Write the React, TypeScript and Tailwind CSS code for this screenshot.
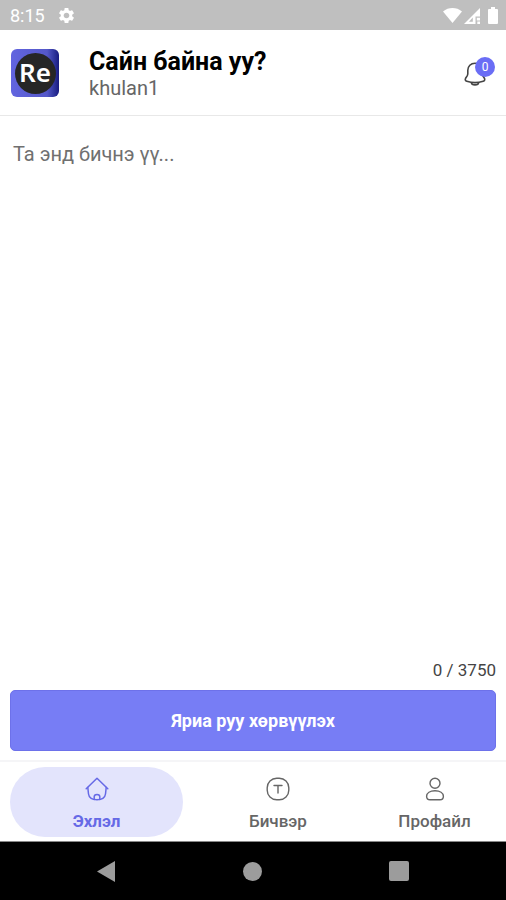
import { useState } from "react";
import { MdSettings } from "react-icons/md";

const MAX_CHARS = 3750;

function StatusBar() {
  return (
    <div className="flex h-[30px] items-center justify-between bg-[#bfbfbf] pt-px pr-2 pl-[10px] text-white">
      <div className="flex items-center gap-3">
        <span className="text-[18px] leading-6">8:15</span>
        <MdSettings className="size-[19px]" aria-hidden="true" />
      </div>
      <div className="flex items-center gap-[2px]" aria-hidden="true">
        <svg className="h-[15px] w-[19px]" viewBox="0 0 19 15" fill="currentColor">
          <path d="M9.500 15 0 3.400C5.500-1.100 13.500-1.100 19 3.400Z" />
        </svg>
        <svg className="h-[16px] w-[16px]" viewBox="0 0 16 16" fill="currentColor">
          <path d="M0 16 16 0v8.500h-4.500V16ZM8.800 9.500 5 13.800h3.800Z" fillRule="evenodd" />
          <path d="M12.800 9.800h3.200v2.600h-3.200zM13.300 13.600H16V16h-2.700z" />
        </svg>
        <svg className="ml-[6px] h-[17px] w-[10px]" viewBox="0 0 10 17" fill="currentColor">
          <path d="M3 0h4v2h2a1 1 0 0 1 1 1v13a1 1 0 0 1-1 1H1a1 1 0 0 1-1-1V3a1 1 0 0 1 1-1h2Z" />
        </svg>
      </div>
    </div>
  );
}

function Logo() {
  return (
    <div className="flex size-12 items-center justify-center rounded-[6px] bg-linear-to-r from-[#6265e0] via-[#5558c8] via-75% to-[#191b80]">
      <div className="flex size-[41px] items-center justify-center rounded-full bg-[#262626] pb-[2px] font-['Noto_Sans',sans-serif] text-[26px] leading-none font-semibold text-white">
        Re
      </div>
    </div>
  );
}

function Header() {
  return (
    <header className="flex h-[86px] items-center border-b border-[#e8e8e8] px-[11px] pt-px">
      <Logo />
      <div className="ml-[30px] flex-1 pt-px">
        <h1 className="text-[25px] leading-7 font-bold text-black">Сайн байна уу?</h1>
        <p className="text-[20px] leading-6 text-[#666]">khulan1</p>
      </div>
      <button type="button" aria-label="Notifications" className="relative flex h-8 w-8 items-center">
        <svg className="size-[26px] text-[#444]" viewBox="0 0 26 26" fill="none" stroke="currentColor" strokeWidth="1.600" strokeLinejoin="round">
          <path d="M12 3.200c-4.200 0-7.200 3-7.200 7v3.500c0 .8-.4 1.700-.8 2.400l-1.400 2.200c-.8 1.400-.2 2.600 1.200 3 5.300 1.700 11.100 1.700 16.400 0 1.400-.4 2-1.800 1.200-3L20 16.100c-.4-.7-.8-1.600-.8-2.400v-3.500c0-4-3.200-7-7.200-7Z" />
          <path d="M8.300 22.300c.4 3.400 7 3.400 7.400 0" />
        </svg>
        <span className="absolute top-0 right-0 flex size-5 items-center justify-center rounded-full bg-[#6a6df5] text-[12px] leading-none text-white">
          0
        </span>
      </button>
    </header>
  );
}

function HomeIcon() {
  return (
    <svg className="size-6" viewBox="0 0 24 24" fill="none" stroke="currentColor" strokeWidth="1.500" strokeLinecap="round" strokeLinejoin="round" aria-hidden="true">
      <path d="M1.200 11.700 12 1.200l10.800 10.500" />
      <path d="M2.800 10.500 3.500 17C4 20.500 7 22.800 12 22.800s8-2.300 8.500-5.800l.7-6.500" />
      <path d="M9.200 22.500v-2.700c0-1.500.9-2.400 2.800-2.400s2.800.9 2.800 2.400v2.700" />
    </svg>
  );
}

function TextIcon() {
  return (
    <svg className="size-6" viewBox="0 0 24 24" fill="none" stroke="currentColor" strokeWidth="1.400" strokeLinecap="round" aria-hidden="true">
      <rect x="1.200" y="1.200" width="21.600" height="21.600" rx="9.500" />
      <path d="M8 8.500h8M12 8.500v7.500" />
    </svg>
  );
}

function ProfileIcon() {
  return (
    <svg className="size-6" viewBox="0 0 24 24" fill="none" stroke="currentColor" strokeWidth="1.400" aria-hidden="true">
      <circle cx="12" cy="6.300" r="5" />
      <path d="M3.600 19.300c0-3.300 3.500-5.500 8.400-5.500s8.400 2.200 8.400 5.500c0 2.300-1.200 3.500-3.400 3.500H7c-2.200 0-3.400-1.200-3.400-3.500Z" />
    </svg>
  );
}

const tabs = [
  { label: "Эхлэл", Icon: HomeIcon, active: true },
  { label: "Бичвэр", Icon: TextIcon, active: false },
  { label: "Профайл", Icon: ProfileIcon, active: false },
];

function TabBar() {
  return (
    <nav className="grid h-[82px] grid-cols-[193fr_170fr_143fr] border-t-2 border-b border-t-[#f5f5f7] border-b-[#888] py-1">
      {tabs.map(({ label, Icon, active }) => (
        <a
          key={label}
          href="#"
          aria-current={active ? "page" : undefined}
          className={
            active
              ? "mx-[10px] flex flex-col items-center gap-[10px] self-center rounded-full bg-[#e3e4fc] pt-[10px] pb-[6px] text-[#6669e6]"
              : "flex flex-col items-center gap-[10px] self-center pt-[10px] pb-[6px] text-[#666]"
          }
        >
          <Icon />
          <span className={active ? "text-[17px] leading-5 font-bold" : "text-[17px] leading-5 font-medium"}>
            {label}
          </span>
        </a>
      ))}
    </nav>
  );
}

function SystemBar() {
  return (
    <div className="flex h-[58px] items-center justify-between bg-black px-[97px] text-[#9c9c9c]">
      <button type="button" aria-label="Back">
        <svg className="h-[21px] w-[18px]" viewBox="0 0 18 21" fill="currentColor">
          <path d="M18 0v21L0 10.500Z" />
        </svg>
      </button>
      <button type="button" aria-label="Home" className="size-[19px] rounded-full bg-[#9c9c9c]" />
      <button type="button" aria-label="Recent apps" className="size-[20px] rounded-[2px] bg-[#9c9c9c]" />
    </div>
  );
}

export default function App() {
  const [text, setText] = useState("");

  return (
    <div className="flex min-h-screen flex-col bg-white font-[Roboto,'Noto_Sans',sans-serif]">
      <StatusBar />
      <Header />
      <main className="flex flex-1 flex-col px-[10px] pb-[9px]">
        <textarea
          aria-label="Та энд бичнэ үү..."
          placeholder="Та энд бичнэ үү..."
          maxLength={MAX_CHARS}
          value={text}
          onChange={(event) => setText(event.target.value)}
          className="w-full flex-1 resize-none px-[3px] pt-[26px] text-[20px] leading-6 text-[#333] outline-none placeholder:text-[#707070]"
        />
        <p className="py-2 text-right text-[17px] leading-6 text-[#444]">
          {text.length} / {MAX_CHARS}
        </p>
        <button type="button" className="h-[61px] rounded-[5px] border border-[#6d71ea] bg-[#777df5] text-[18px] leading-6 font-bold text-white">
          Яриа руу хөрвүүлэх
        </button>
      </main>
      <TabBar />
      <SystemBar />
    </div>
  );
}
